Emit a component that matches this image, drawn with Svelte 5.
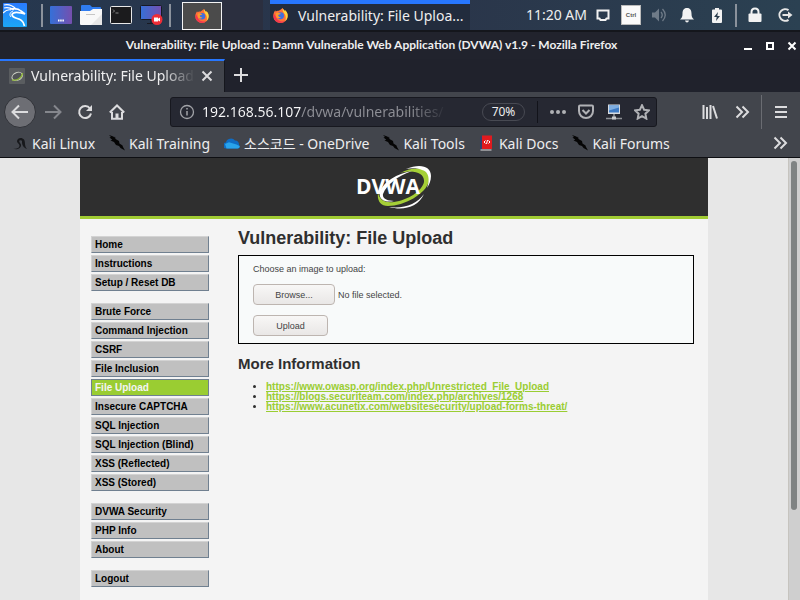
<script lang="ts">
	const menu = [
		['Home', 'Instructions', 'Setup / Reset DB'],
		[
			'Brute Force',
			'Command Injection',
			'CSRF',
			'File Inclusion',
			'File Upload',
			'Insecure CAPTCHA',
			'SQL Injection',
			'SQL Injection (Blind)',
			'XSS (Reflected)',
			'XSS (Stored)'
		],
		['DVWA Security', 'PHP Info', 'About'],
		['Logout']
	];

	const links = [
		'https://www.owasp.org/index.php/Unrestricted_File_Upload',
		'https://blogs.securiteam.com/index.php/archives/1268',
		'https://www.acunetix.com/websitesecurity/upload-forms-threat/'
	];

	const bookmarks = [
		{ icon: 'kali', label: 'Kali Linux' },
		{ icon: 'dragon', label: 'Kali Training' },
		{ icon: 'cloud', label: '소스코드 - OneDrive' },
		{ icon: 'dragon', label: 'Kali Tools' },
		{ icon: 'docs', label: 'Kali Docs' },
		{ icon: 'dragon', label: 'Kali Forums' }
	];

	let current = $state('File Upload');
	let address = $state('192.168.56.107/dvwa/vulnerabilities/');
	let files = $state<FileList | null>(null);
	let fileName = $derived(files && files.length ? files[0].name : 'No file selected.');
</script>

{#snippet firefox(size: number)}
	<svg width={size} height={size} viewBox="0 0 16 16">
		<path d="M8 1.8C9 .8 10 .4 10.400 0c.2 1.500 1.300 2 2.300 3.300l.4-.8c1.500 1.500 2.700 3.600 2.500 6.200A7.600 7.300 0 0 1 .4 8.600c0-2.500.7-4.400 2-6.100l.5 1.300c1-.9 2-1.100 3.200-.8z" fill="#ff7139" />
		<path d="M10.400 0c.2 1.500 1.300 2 2.300 3.300l.4-.8c1.500 1.500 2.700 3.600 2.500 6.200-.1 2-1 3.900-2.500 5.200 1-3 .7-6-1.100-8C10.800 4.400 9.800 2 10.400 0z" fill="#ffd43c" />
		<path d="M.4 8.600a7.600 7.300 0 0 0 12.700 5.300C9 15.500 4 13 3 9L1 6z" fill="#f5374f" />
		<circle cx="8" cy="8.300" r="3.700" fill="#3f6fe0" />
		<path d="M3.200 5.500C5 4.500 6.500 5 8.500 6c-1 1-2.500.8-3 1.500 0 1.500 1.300 2.700 3 2.200-1.400 2-4.500 1.500-5.300-.7z" fill="#ff9a2b" />
	</svg>
{/snippet}

{#snippet chevrons()}
	<svg width="16" height="16" viewBox="0 0 16 16" class="line">
		<path d="M2.500 2.500 8 8l-5.500 5.500M8.500 2.500 14 8l-5.500 5.500" />
	</svg>
{/snippet}

<div class="screen">
	<header class="panel">
		<button class="logo" aria-label="Applications">
			<svg width="24" height="24" viewBox="0 0 24 24">
				<defs>
					<linearGradient id="kaliBlue" x1="0" y1="0" x2="0" y2="1">
						<stop offset="0" stop-color="#2a7bff" />
						<stop offset="1" stop-color="#1ba6f5" />
					</linearGradient>
				</defs>
				<rect width="24" height="24" rx="1" fill="url(#kaliBlue)" />
				<path d="M1 2c4-1 8 0 12 4M1 5c4-1 7 0 10 2M0 10c3-3 5-4 8-3" fill="none" stroke="#fff" stroke-width="1.100" />
				<path d="M7 6c5-1 9 0 11 2l4 3-4-1c-4-1-8-1-9 1.500C9 17 20 13 21.500 23" fill="none" stroke="#fff" stroke-width="1.700" />
				<path d="M10 8c-3 1-4 4-2 6" fill="none" stroke="#fff" />
			</svg>
		</button>
		<span class="sep"></span>
		<nav class="launchers" aria-label="Launchers">
			<button aria-label="Show desktop">
				<svg width="22" height="20" viewBox="0 0 22 20">
					<defs>
						<linearGradient id="desk" x1="0" y1="0" x2="1" y2="0">
							<stop offset="0" stop-color="#3570d8" />
							<stop offset="1" stop-color="#754fae" />
						</linearGradient>
					</defs>
					<rect y="1" width="22" height="18" rx="1" fill="url(#desk)" />
					<path d="M8 15.500h6" stroke="#fff" stroke-width="2" stroke-dasharray="1.500 .7" />
				</svg>
			</button>
			<button aria-label="File manager">
				<svg width="22" height="20" viewBox="0 0 22 20">
					<path d="M1 1q0-1 1-1h8l2 2h8q1 0 1 1v5H1z" fill="#2f7cf0" />
					<path d="M0 6h10l3-2h9v15q0 1-1 1H1q-1 0-1-1z" fill="#f8f8f8" />
					<path d="M22 9v11H11z" fill="#e6e6e6" />
					<path d="M6 9.500h9" stroke="#c6c6c6" />
				</svg>
			</button>
			<button aria-label="Terminal">
				<svg width="22" height="20" viewBox="0 0 22 20">
					<rect x=".5" y="1.500" width="21" height="17" rx="1" fill="#1b1b1d" stroke="#e8e8e8" />
					<path d="m3 4.500 1.500 1.500L3 7.500M5.500 8h3" fill="none" stroke="#888" />
				</svg>
			</button>
			<button aria-label="Screen recorder">
				<svg width="23" height="20" viewBox="0 0 23 20">
					<rect x=".5" y=".5" width="21" height="14" rx="1" fill="url(#desk)" stroke="#171923" />
					<path d="M7 18.500h10M11 15v3" stroke="#171923" />
					<circle cx="17" cy="14.500" r="5.500" fill="#ee2d37" />
					<path d="M14 12.500h4v1.200l2-1.200v4l-2-1.200v1.200h-4z" fill="#fff" />
				</svg>
			</button>
		</nav>
		<span class="sep"></span>
		<button class="pinned" aria-label="Firefox">{@render firefox(14)}</button>
		<span class="shade"></span>
		<button class="task">
			{@render firefox(15)}
			<span>Vulnerability: File Uploa...</span>
		</button>
		<div class="tray">
			<time>11:20 AM</time>
			<button class="cell" aria-label="Display">
				<svg width="14" height="14" viewBox="0 0 14 14">
					<path d="M1.500 2.500h11v8h-2l-1 1.500h-5l-1-1.500h-2z" fill="none" stroke="#f2f2f2" stroke-width="2" />
				</svg>
			</button>
			<button class="cell" aria-label="Host key"><kbd>Ctrl</kbd></button>
			<button class="cell" aria-label="Volume">
				<svg width="16" height="16" viewBox="0 0 16 16">
					<path d="M1 5.500h3l4-4v13l-4-4H1z" fill="#6f7b88" />
					<path d="M10 5q2.500 3 0 6M11.500 2q5.500 6 0 12" fill="none" stroke="#6f7b88" stroke-width="1.300" />
				</svg>
			</button>
			<button class="cell" aria-label="Notifications">
				<svg width="14" height="16" viewBox="0 0 14 16">
					<path d="M7 1c3.500 0 4.500 2.500 4.500 5.500 0 3 .5 4 2.500 6H0c2-2 2.500-3 2.500-6C2.500 3.500 3.500 1 7 1z" fill="#f2f2f2" />
					<path d="M5 13.500h4q-.5 2-2 2t-2-2z" fill="#f2f2f2" />
				</svg>
			</button>
			<button class="cell wide" aria-label="Battery">
				<svg width="10" height="15" viewBox="0 0 10 15">
					<path d="M3 0h4v1.500h2q1 0 1 1V14q0 1-1 1H1q-1 0-1-1V2.500q0-1 1-1h2z" fill="#f2f2f2" />
					<path d="M6 4 2 9h2.700L4 13l4-5H5.300z" fill="#293c4c" />
				</svg>
			</button>
			<span class="sep"></span>
			<button class="cell wide" aria-label="Lock">
				<svg width="14" height="16" viewBox="0 0 14 16">
					<path d="M3.500 7V5q0-3.500 3.500-3.500T10.500 5v2" fill="none" stroke="#f2f2f2" stroke-width="2" />
					<rect x=".5" y="6.500" width="13" height="8.500" rx="1" fill="#f2f2f2" />
				</svg>
			</button>
			<button class="cell" aria-label="Log out">
				<svg width="16" height="16" viewBox="0 0 16 16">
					<path d="M11.500 3.200A5.800 5.800 0 1 0 11.500 12.800M5.500 8h7" fill="none" stroke="#e6e6e6" stroke-width="2" />
					<path d="m11 4.500 4.500 3.500-4.500 3.500z" fill="#e6e6e6" />
				</svg>
			</button>
		</div>
	</header>

	<div class="titlebar">
		<span class="title">Vulnerability: File Upload :: Damn Vulnerable Web Application (DVWA) v1.9 - Mozilla Firefox</span>
		<div class="window-buttons">
			<button aria-label="Minimize">
				<svg width="10" height="10" viewBox="0 0 10 10"><path d="M1 8h8" stroke="#fff" stroke-width="2" /></svg>
			</button>
			<button aria-label="Maximize">
				<svg width="10" height="10" viewBox="0 0 10 10"><rect x="2" y="2" width="6" height="6" fill="none" stroke="#fff" stroke-width="2" /></svg>
			</button>
			<button aria-label="Close">
				<svg width="10" height="10" viewBox="0 0 10 10"><path d="m1.500 1.500 7 7m0-7-7 7" stroke="#fff" stroke-width="2" /></svg>
			</button>
		</div>
	</div>

	<div class="tabs">
		<div class="tab">
			<svg width="16" height="16" viewBox="0 0 16 16">
				<rect width="16" height="16" rx="1" fill="#5a5d60" />
				<ellipse cx="8" cy="8.500" rx="5.500" ry="3.800" transform="rotate(-25 8 8)" fill="#505356" stroke="#d4d8cc" />
				<path d="M3 12c5 1 10-2 10.500-7" fill="none" stroke="#8fb53a" stroke-width="1.300" />
			</svg>
			<span class="tab-title">Vulnerability: File Upload</span>
			<button aria-label="Close tab">
				<svg width="12" height="12" viewBox="0 0 12 12" class="line"><path d="m1.500 1.500 9 9m0-9-9 9" /></svg>
			</button>
		</div>
		<button class="new-tab" aria-label="New tab">
			<svg width="14" height="14" viewBox="0 0 14 14" class="line"><path d="M7 0v14M0 7h14" /></svg>
		</button>
	</div>

	<div class="navbar">
		<button class="tool back" aria-label="Back">
			<svg width="18" height="16" viewBox="0 0 18 16" class="line"><path d="M17 8H2M8 1.500 1.500 8 8 14.500" /></svg>
		</button>
		<button class="tool" aria-label="Forward" disabled>
			<svg width="18" height="16" viewBox="0 0 18 16" class="line faint"><path d="M1 8h15M10 1.500 16.500 8 10 14.500" /></svg>
		</button>
		<button class="tool" aria-label="Reload">
			<svg width="16" height="16" viewBox="0 0 16 16" class="line">
				<path d="M13 4.500A6 6 0 1 0 14 9.500" />
				<path d="M15 1v6H9z" fill="#dcdcde" stroke="none" />
			</svg>
		</button>
		<button class="tool" aria-label="Home">
			<svg width="16" height="16" viewBox="0 0 16 16" class="line">
				<path d="M.8 8.500 8 1.500l7.200 7M3 8v6.700h10V8" />
				<path d="M6.500 15V9.500h3V15z" fill="#dcdcde" stroke="none" />
			</svg>
		</button>
		<div class="urlbar">
			<svg width="16" height="16" viewBox="0 0 16 16">
				<circle cx="8" cy="8" r="6.500" fill="none" stroke="#a2a3a8" stroke-width="1.300" />
				<path d="M8 7v4.500M8 4v1.500" stroke="#a2a3a8" stroke-width="1.500" />
			</svg>
			<input type="text" aria-label="Address" bind:value={address} />
			<button class="zoom">70%</button>
			<span class="divider"></span>
			<button class="action" aria-label="Page actions">
				<svg width="18" height="16" viewBox="0 0 18 16"><g fill="#b0b1b5"><circle cx="3" cy="8" r="2" /><circle cx="9" cy="8" r="2" /><circle cx="15" cy="8" r="2" /></g></svg>
			</button>
			<button class="action" aria-label="Save to Pocket">
				<svg width="16" height="16" viewBox="0 0 16 16" class="line soft">
					<path d="M1 2.500q0-1 1-1h12q1 0 1 1v4.500q0 3-2 5t-5 2-5-2-2-5zM4.500 6 8 9.500 11.500 6" />
				</svg>
			</button>
			<button class="action" aria-label="Connection">
				<svg width="16" height="16" viewBox="0 0 16 16">
					<rect x="2" y=".5" width="12" height="9.500" fill="#d7dbe0" />
					<rect x="3" y="1.500" width="10" height="7" fill="#3d7ac4" />
					<path d="M3 1.500h10v2L3 6.500z" fill="#7eaee2" />
					<path d="M8 10v3M0 14.500h16" stroke="#8e9196" stroke-width="1.500" />
					<rect x="6" y="12.500" width="4" height="3" fill="#c8cacd" />
				</svg>
			</button>
			<button class="action" aria-label="Bookmark this page">
				<svg width="16" height="16" viewBox="0 0 16 16" class="line soft">
					<path d="m8 1.200 2.100 4.500 4.900.6-3.600 3.400.9 4.900L8 12.200l-4.300 2.400.9-4.900L1 6.300l4.900-.6z" />
				</svg>
			</button>
		</div>
		<div class="tools">
			<button class="tool" aria-label="Library">
				<svg width="16" height="16" viewBox="0 0 16 16" class="line"><path d="M1.500 1v14M5 3v12M8.500 1v14M11 2l4 12.500" /></svg>
			</button>
			<button class="tool" aria-label="More tools">{@render chevrons()}</button>
			<span class="divider"></span>
			<button class="tool" aria-label="Menu">
				<svg width="14" height="14" viewBox="0 0 14 14" class="line"><path d="M1 2h12M1 7h12M1 12h12" /></svg>
			</button>
		</div>
	</div>

	<nav class="bookmarks" aria-label="Bookmarks">
		{#each bookmarks as { icon, label }}
			<a href="#{label}">
				<svg width="16" height="16" viewBox="0 0 16 16">
					{#if icon === 'kali'}
						<path d="M1 13.500c3 .8 6 0 6.500-2.500.3-2.500-2.500-2.500-2.500-5C5.500 2.500 10 2 12 4.500c1.700 2.500 0 6 3 9.500-3.500-1-5.300-4-5-8.200-1-1-2.800-.8-2.800.4C7.500 8 9.500 8.500 9 11c-.8 3-4.500 4-8 2.500z" fill="#17181b" />
					{:else if icon === 'dragon'}
						<path d="M0 0c2 .5 4 1 5.500 2.500l.5-1 .5 2.500L10 6l.5 2.500 3 2 .5 1.500 2 3.500-4.500-2.500-1.500-2-3-1L5 7 1.500 5.500l1.800-.8L.5 2.500 2 2z" fill="#050505" />
					{:else if icon === 'cloud'}
						<path d="M2.500 13.500A3.500 3 0 0 1 2 7.500 5 4.500 0 0 1 11 5.500a4 4 0 0 1 4 4.500 2.500 2 0 0 1-1.500 3.500z" fill="#0f6cc4" />
						<path d="M2.500 13.500 1 9l4-1.800 7.500 2.300 3 1.500a2 2 0 0 1-2 2.500z" fill="#29a4ec" />
					{:else}
						<path d="M1 1.500h2V15H1z" fill="#31406b" />
						<path d="M3 .5h10V14H3z" fill="#e01a1f" />
						<path d="M1.500 15h11" stroke="#ddd" />
						<path d="M6.500 5.500 5 7l1.500 1.500M9.500 5.500 11 7 9.500 8.500M8.500 5l-1 4" fill="none" stroke="#fff" />
					{/if}
				</svg>
				{label}
			</a>
		{/each}
		<button class="overflow" aria-label="More bookmarks">{@render chevrons()}</button>
	</nav>

	<div class="viewport">
		<div class="page">
			<div class="container">
				<div class="header">
					<svg width="76" height="44" viewBox="0 0 76 44" role="img" aria-label="DVWA">
						<path d="M44 8C62-1 75 4 73 16 70 29 48 41 32 41c-8 0-11-6-10-13 2 8 8 10 16 9 14-2 28-11 30-20C69 8 58 4 44 8z" fill="#a5cf37" />
						<path d="M50 4c14-6 25-3 25 7 0 5-2 9-4 12 3-9 2-16-5-18-4-2-10-2-16-1zM33 42c15 2 28-3 35-13-6 13-20 17-35 13zM24 26C29 16 40 9 56 6 42 11 31 19 27 29c-1 5 5 7 11 7-10 2-16-2-14-10z" fill="#fff" />
						<text x="0" y="29">DVWA</text>
					</svg>
				</div>
				<div class="columns">
					<nav class="menu" aria-label="DVWA">
						{#each menu as group}
							<ul>
								{#each group as item}
									<li class:selected={item === current}>
										<a href="#{item}" onclick={() => (current = item)}>{item}</a>
									</li>
								{/each}
							</ul>
						{/each}
					</nav>
					<main>
						<h1>Vulnerability: File Upload</h1>
						<form onsubmit={(e) => e.preventDefault()}>
							<label for="uploaded">Choose an image to upload:</label>
							<div class="file">
								<input id="uploaded" type="file" accept="image/*" bind:files />
								<label class="button browse" for="uploaded">Browse...</label>
								<span>{fileName}</span>
							</div>
							<button class="button" type="submit">Upload</button>
						</form>
						<h2>More Information</h2>
						<ul class="links">
							{#each links as link}
								<li><a href={link}>{link}</a></li>
							{/each}
						</ul>
					</main>
				</div>
			</div>
		</div>
		<div class="scrollbar"><div class="thumb"></div></div>
	</div>
</div>

<style>
	:global(body) {
		margin: 0;
	}

	.screen {
		display: flex;
		flex-direction: column;
		height: 100vh;
		overflow: hidden;
		font-family: 'Noto Sans', 'Noto Sans CJK KR', sans-serif;
		font-size: 14px;
		color: #eeeeef;
		background: #e7e7e7;
	}

	button {
		display: flex;
		align-items: center;
		justify-content: center;
		margin: 0;
		padding: 0;
		border: none;
		background: none;
		color: inherit;
		font: inherit;
	}

	svg {
		display: block;
		flex: none;
	}

	.line {
		fill: none;
		stroke: #dcdcde;
		stroke-width: 2;
	}

	.soft {
		stroke: #b0b1b5;
	}

	.faint {
		stroke: #85878d;
	}

	/* desktop panel */
	.panel {
		display: flex;
		align-items: center;
		flex: none;
		height: 30px;
		border-bottom: 2px solid #14161c;
		background: linear-gradient(to right, #26384f, #2a3449 50%, #2b4152);
	}

	.logo {
		margin: 0 14px 0 3px;
	}

	.sep {
		width: 2px;
		height: 23px;
		background: #8b929c;
	}

	.launchers {
		display: flex;
		gap: 8px;
		padding: 0 6px 0 7px;
	}

	.pinned {
		box-sizing: border-box;
		width: 40px;
		height: 28px;
		margin-left: 11px;
		align-self: flex-end;
		border: 1px solid #f4f4f4;
		background: #4b4b4b;
	}

	.shade {
		align-self: stretch;
		width: 41px;
		margin-right: 7px;
		background: #2b2f3f;
	}

	.task {
		box-sizing: border-box;
		align-self: stretch;
		width: 200px;
		justify-content: flex-start;
		gap: 10px;
		padding: 0 3px 4px;
		border-top: 4px solid #2777ff;
		background: #222c3d;
		white-space: nowrap;
	}

	.tray {
		display: flex;
		align-items: center;
		margin-left: auto;
		padding-right: 1px;
	}

	.tray time {
		padding: 0 2px 2px 0;
	}

	.cell {
		width: 28px;
	}

	.cell.wide {
		width: 32px;
	}

	.tray .sep {
		margin: 0 2px;
	}

	kbd {
		box-sizing: border-box;
		width: 20px;
		height: 20px;
		border: 1px solid #bbb;
		background: #fafafa;
		color: #555;
		font: bold 6px/18px 'Liberation Sans', sans-serif;
	}

	/* window title */
	.titlebar {
		display: flex;
		align-items: center;
		box-sizing: border-box;
		flex: none;
		height: 27px;
		padding: 0 3px 2px 0;
		background: #21232d;
	}

	.title {
		flex: 1;
		overflow: hidden;
		text-align: center;
		font: bold 12px/24px Lato, sans-serif;
		white-space: nowrap;
	}

	.window-buttons {
		display: flex;
		gap: 12px;
		padding-top: 2px;
	}

	/* tabs */
	.tabs {
		display: flex;
		flex: none;
		height: 33px;
		background: #20222c;
	}

	.tab {
		display: flex;
		align-items: center;
		box-sizing: border-box;
		width: 225px;
		gap: 6px;
		padding: 0 11px 2px 9px;
		border-top: 2px solid #2777ff;
		border-right: 1px solid #15171d;
		background: #42454c;
	}

	.tab-title {
		flex: 1;
		white-space: nowrap;
		mask-image: linear-gradient(to right, #000 80%, transparent);
	}

	.new-tab {
		width: 32px;
		padding-bottom: 2px;
	}

	/* navigation */
	.navbar {
		display: flex;
		align-items: center;
		flex: none;
		height: 39px;
		padding: 0 3px 0 4px;
		background: #42454c;
	}

	.tool {
		width: 32px;
		height: 32px;
	}

	.back {
		box-sizing: border-box;
		margin-right: 1px;
		border: 1px solid #303238;
		border-radius: 50%;
		background: #6d6e74;
	}

	.urlbar {
		display: flex;
		align-items: center;
		flex: 1;
		box-sizing: border-box;
		min-width: 0;
		height: 30px;
		margin-left: 37px;
		padding-left: 8px;
		border: 1px solid #17181f;
		border-radius: 3px;
		background: #262832;
	}

	.urlbar input {
		flex: 1;
		min-width: 0;
		margin: 0 35px 0 7px;
		padding: 0;
		border: none;
		outline: none;
		background: linear-gradient(to right, #f9f9fa 99px, #8e8f96 99px, #8e8f96 85%, transparent) text;
		color: transparent;
		font: inherit;
	}

	.zoom {
		box-sizing: border-box;
		width: 43px;
		height: 18px;
		border: 1px solid #484a53;
		border-radius: 9px;
		font-size: 12px;
	}

	.divider {
		width: 1px;
		height: 22px;
		margin: 0 6px 0 12px;
		background: #12131a;
	}

	.action {
		width: 28px;
		height: 28px;
	}

	.tools {
		display: flex;
		align-items: center;
		margin-left: 37px;
	}

	.tools .divider {
		height: 34px;
		margin: 0 3px;
		background: #6a6c72;
	}

	/* bookmarks */
	.bookmarks {
		display: flex;
		align-items: center;
		box-sizing: border-box;
		flex: none;
		gap: 14px;
		height: 27px;
		padding: 0 12px 2px;
		border-bottom: 1px solid #0e0f13;
		background: #42454c;
	}

	.bookmarks a {
		display: flex;
		align-items: center;
		gap: 4px;
		color: inherit;
		text-decoration: none;
		white-space: nowrap;
	}

	.overflow {
		margin-left: auto;
	}

	/* web page */
	.viewport {
		display: flex;
		flex: 1;
		min-height: 0;
		font-family: 'Liberation Sans', Arial, sans-serif;
		font-size: 9px;
		color: #2f2f2f;
	}

	.page {
		flex: 1;
		overflow: hidden;
		background: #e7e7e7;
	}

	.container {
		max-width: 628px;
		min-height: 100%;
		margin: 0 auto;
		background: #f4f4f4;
	}

	.header {
		display: flex;
		justify-content: center;
		padding: 7px 0;
		border-bottom: 3px solid #a1cc33;
		background: #2f2f2f;
	}

	.header text {
		fill: #fff;
		font: bold 21px 'Open Sans', sans-serif;
	}

	.columns {
		display: flex;
		gap: 29px;
		padding: 0 14px 0 11px;
	}

	.menu {
		width: 118px;
		padding-top: 17px;
	}

	.menu ul {
		margin: 0 0 12px;
		padding: 0;
		list-style: none;
	}

	.menu li {
		margin-bottom: 2px;
		border: 1px solid;
		border-color: #d3d3d3 #708090 #708090 #d3d3d3;
		background: #c0c0c0;
	}

	.menu li.selected {
		border-color: #708090;
		background: #9acd32;
	}

	.menu a {
		display: block;
		padding: 1px 3px 0;
		color: #000;
		font-size: 10px;
		font-weight: bold;
		line-height: 14px;
		text-decoration: none;
	}

	.menu .selected a {
		color: #f4f4f4;
	}

	main {
		flex: 1;
		min-width: 0;
	}

	h1 {
		margin: 8px 0 6px;
		font-size: 18px;
		line-height: 22px;
	}

	form {
		padding: 8px 14px 7px;
		border: 1px solid #000;
		background: #f8fafa;
		color: #444;
		line-height: 10px;
	}

	form label {
		display: block;
	}

	.file {
		display: flex;
		align-items: center;
		gap: 3px;
		margin: 10px 0;
	}

	.file input {
		position: absolute;
		width: 1px;
		height: 1px;
		opacity: 0;
	}

	.button {
		display: flex;
		align-items: center;
		justify-content: center;
		box-sizing: border-box;
		width: 75px;
		height: 21px;
		border: 1px solid #bdb5b0;
		border-radius: 4px;
		background: linear-gradient(#f8f7f6, #e9e7e6);
		color: #444;
	}

	form .browse {
		display: flex;
		width: 82px;
	}

	h2 {
		margin: 11px 0 9px;
		font-size: 15px;
		line-height: 18px;
	}

	.links {
		margin: 0;
		padding-left: 28px;
		font-size: 10px;
		line-height: 10px;
	}

	.links a {
		color: #9acd32;
		font-weight: bold;
	}

	.scrollbar {
		box-sizing: border-box;
		width: 12px;
		padding: 3px 2px;
		border-left: 1px solid #c6c4bf;
		background: #cfcfcf;
	}

	.thumb {
		width: 6px;
		height: 80%;
		border-radius: 3px;
		background: #7f8383;
	}
</style>
